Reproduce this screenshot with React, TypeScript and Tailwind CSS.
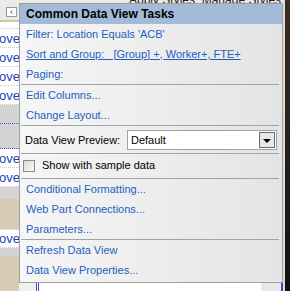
import React from 'react';

const link = 'text-[#1f5fbf] hover:underline cursor-pointer';

function Row({ children, className = '' }: { children: React.ReactNode; className?: string }) {
  return <div className={`h-[20px] flex items-center pl-[6px] ${className}`}>{children}</div>;
}

function Sep() {
  return <div className="h-[1px] ml-[1px] mr-[3px] bg-[#a3a3a3]" />;
}

function Ove({ className = '' }: { className?: string }) {
  return (
    <div className={`h-[19px] flex items-center bg-white border-b border-dotted border-[#c8c8c8] text-[13px] text-[#1d3fb4] leading-none -ml-[1px] ${className}`}>
      ove
    </div>
  );
}

export default function App() {
  return (
    <div className="relative w-[290px] h-[291px] overflow-hidden bg-[#d6d3cc] font-['Liberation_Sans',Arial,sans-serif]">
      {/* background: the editor behind the task panel */}
      <div className="flex h-full">
        <div className="w-[19px] flex flex-col overflow-hidden">
          <div className="h-[20px] bg-[#eceae4] flex items-center justify-end pr-[2px] pt-[4px]">
            <div className="w-[11px] h-[10px] bg-white border border-[#7f9db9] flex items-center justify-center text-[9px] leading-none text-[#333]">
              ‹
            </div>
          </div>
          <div className="h-[2px] bg-[#d5c5a8]" />
          <div className="h-[7px] bg-white border-b border-dotted border-[#c8c8c8]" />
          <Ove />
          <Ove />
          <Ove />
          <Ove />
          <div className="h-[18px] bg-[#d4d4d4]" />
          <div className="h-[1px] border-b border-dotted border-[#3a5ed0]" />
          <div className="h-[24px] bg-[#d4d4d4]" />
          <div className="h-[1px] border-b border-dotted border-[#3a5ed0]" />
          <Ove />
          <Ove />
          <div className="h-[12px] bg-[#d4d4d4]" />
          <div className="h-[30px] bg-[#d8cbb4]" />
          <Ove className="border-t" />
          <div className="h-[8px] bg-[#d4d4d4]" />
          <div className="flex-1 bg-[#d8cbb4]" />
        </div>
        <div className="flex-1 flex flex-col">
          <div className="h-[4px] overflow-hidden bg-[#eceae4] pl-[110px]">
            <div className="-mt-[9px] text-[12px] text-[#222] whitespace-nowrap">Apply Styles&nbsp;&nbsp;Manage Styles</div>
          </div>
          <div className="flex-1 bg-white" />
          <div className="h-[9px] flex">
            <div className="w-[17px] bg-[#f0f0f0]" />
            <div className="w-[1px] bg-[#2b4fd0]" />
            <div className="w-[1px] bg-white" />
            <div className="w-[1px] bg-[#2b4fd0]" />
            <div className="flex-1 bg-white" />
            <div className="w-[20px] bg-[#e8e8e8]" />
            <div className="w-[2px] bg-[#2b4fd0]" />
          </div>
        </div>
        <div className="w-[7px] bg-gradient-to-b from-[#3b2b1f] via-[#2a1f17] to-[#141010] border-l-2 border-[#dcdcdc]" />
      </div>

      {/* Common Data View Tasks panel */}
      <div className="absolute left-[19px] top-[3px] w-[264px] h-[280px] border border-[#a0a0a0] bg-gradient-to-r from-[#f6f6f6] to-[#e4e4e4] text-[11px] text-black leading-none">
        <div className="h-[20px] bg-[#a3bbd8] flex items-center pl-[6px] font-bold text-[12px]">
          Common Data View Tasks
        </div>
        <Row><span className={link}>Filter: Location Equals 'ACB'</span></Row>
        <Row>
          <span className="text-[#1f5fbf] underline whitespace-pre cursor-pointer">Sort and Group:   [Group] +, Worker+, FTE+</span>
        </Row>
        <Row><span className={link}>Paging:</span></Row>
        <Sep />
        <Row><span className={link}>Edit Columns...</span></Row>
        <Row><span className={link}>Change Layout...</span></Row>
        <Sep />
        <div className="h-[27px] flex items-start pt-[4px] pl-[5px]">
          <span className="w-[102px] h-[20px] flex items-center">Data View Preview:</span>
          <div className="w-[150px] h-[20px] border border-[#a0a0a0] bg-white flex items-center pl-[3px] pr-[1px]">
            <span className="flex-1">Default</span>
            <div className="w-[16px] h-[16px] border border-[#6b6b6b] bg-[#e8e8e8] flex items-center justify-center">
              <div className="w-0 h-0 border-l-[4px] border-r-[4px] border-t-[4px] border-l-transparent border-r-transparent border-t-black mt-[2px]" />
            </div>
          </div>
        </div>
        <Sep />
        <div className="h-[24px] flex items-center pl-[3px] pb-[1px]">
          <div className="w-[12px] h-[12px] border border-[#8c8c8c] bg-gradient-to-br from-[#dcdcdc] to-[#f8f8f8] mr-[7px]" />
          <span>Show with sample data</span>
        </div>
        <Sep />
        <Row><span className={link}>Conditional Formatting...</span></Row>
        <Row><span className={link}>Web Part Connections...</span></Row>
        <Row><span className={link}>Parameters...</span></Row>
        <Sep />
        <Row><span className={link}>Refresh Data View</span></Row>
        <Row><span className={link}>Data View Properties...</span></Row>
      </div>
    </div>
  );
}
